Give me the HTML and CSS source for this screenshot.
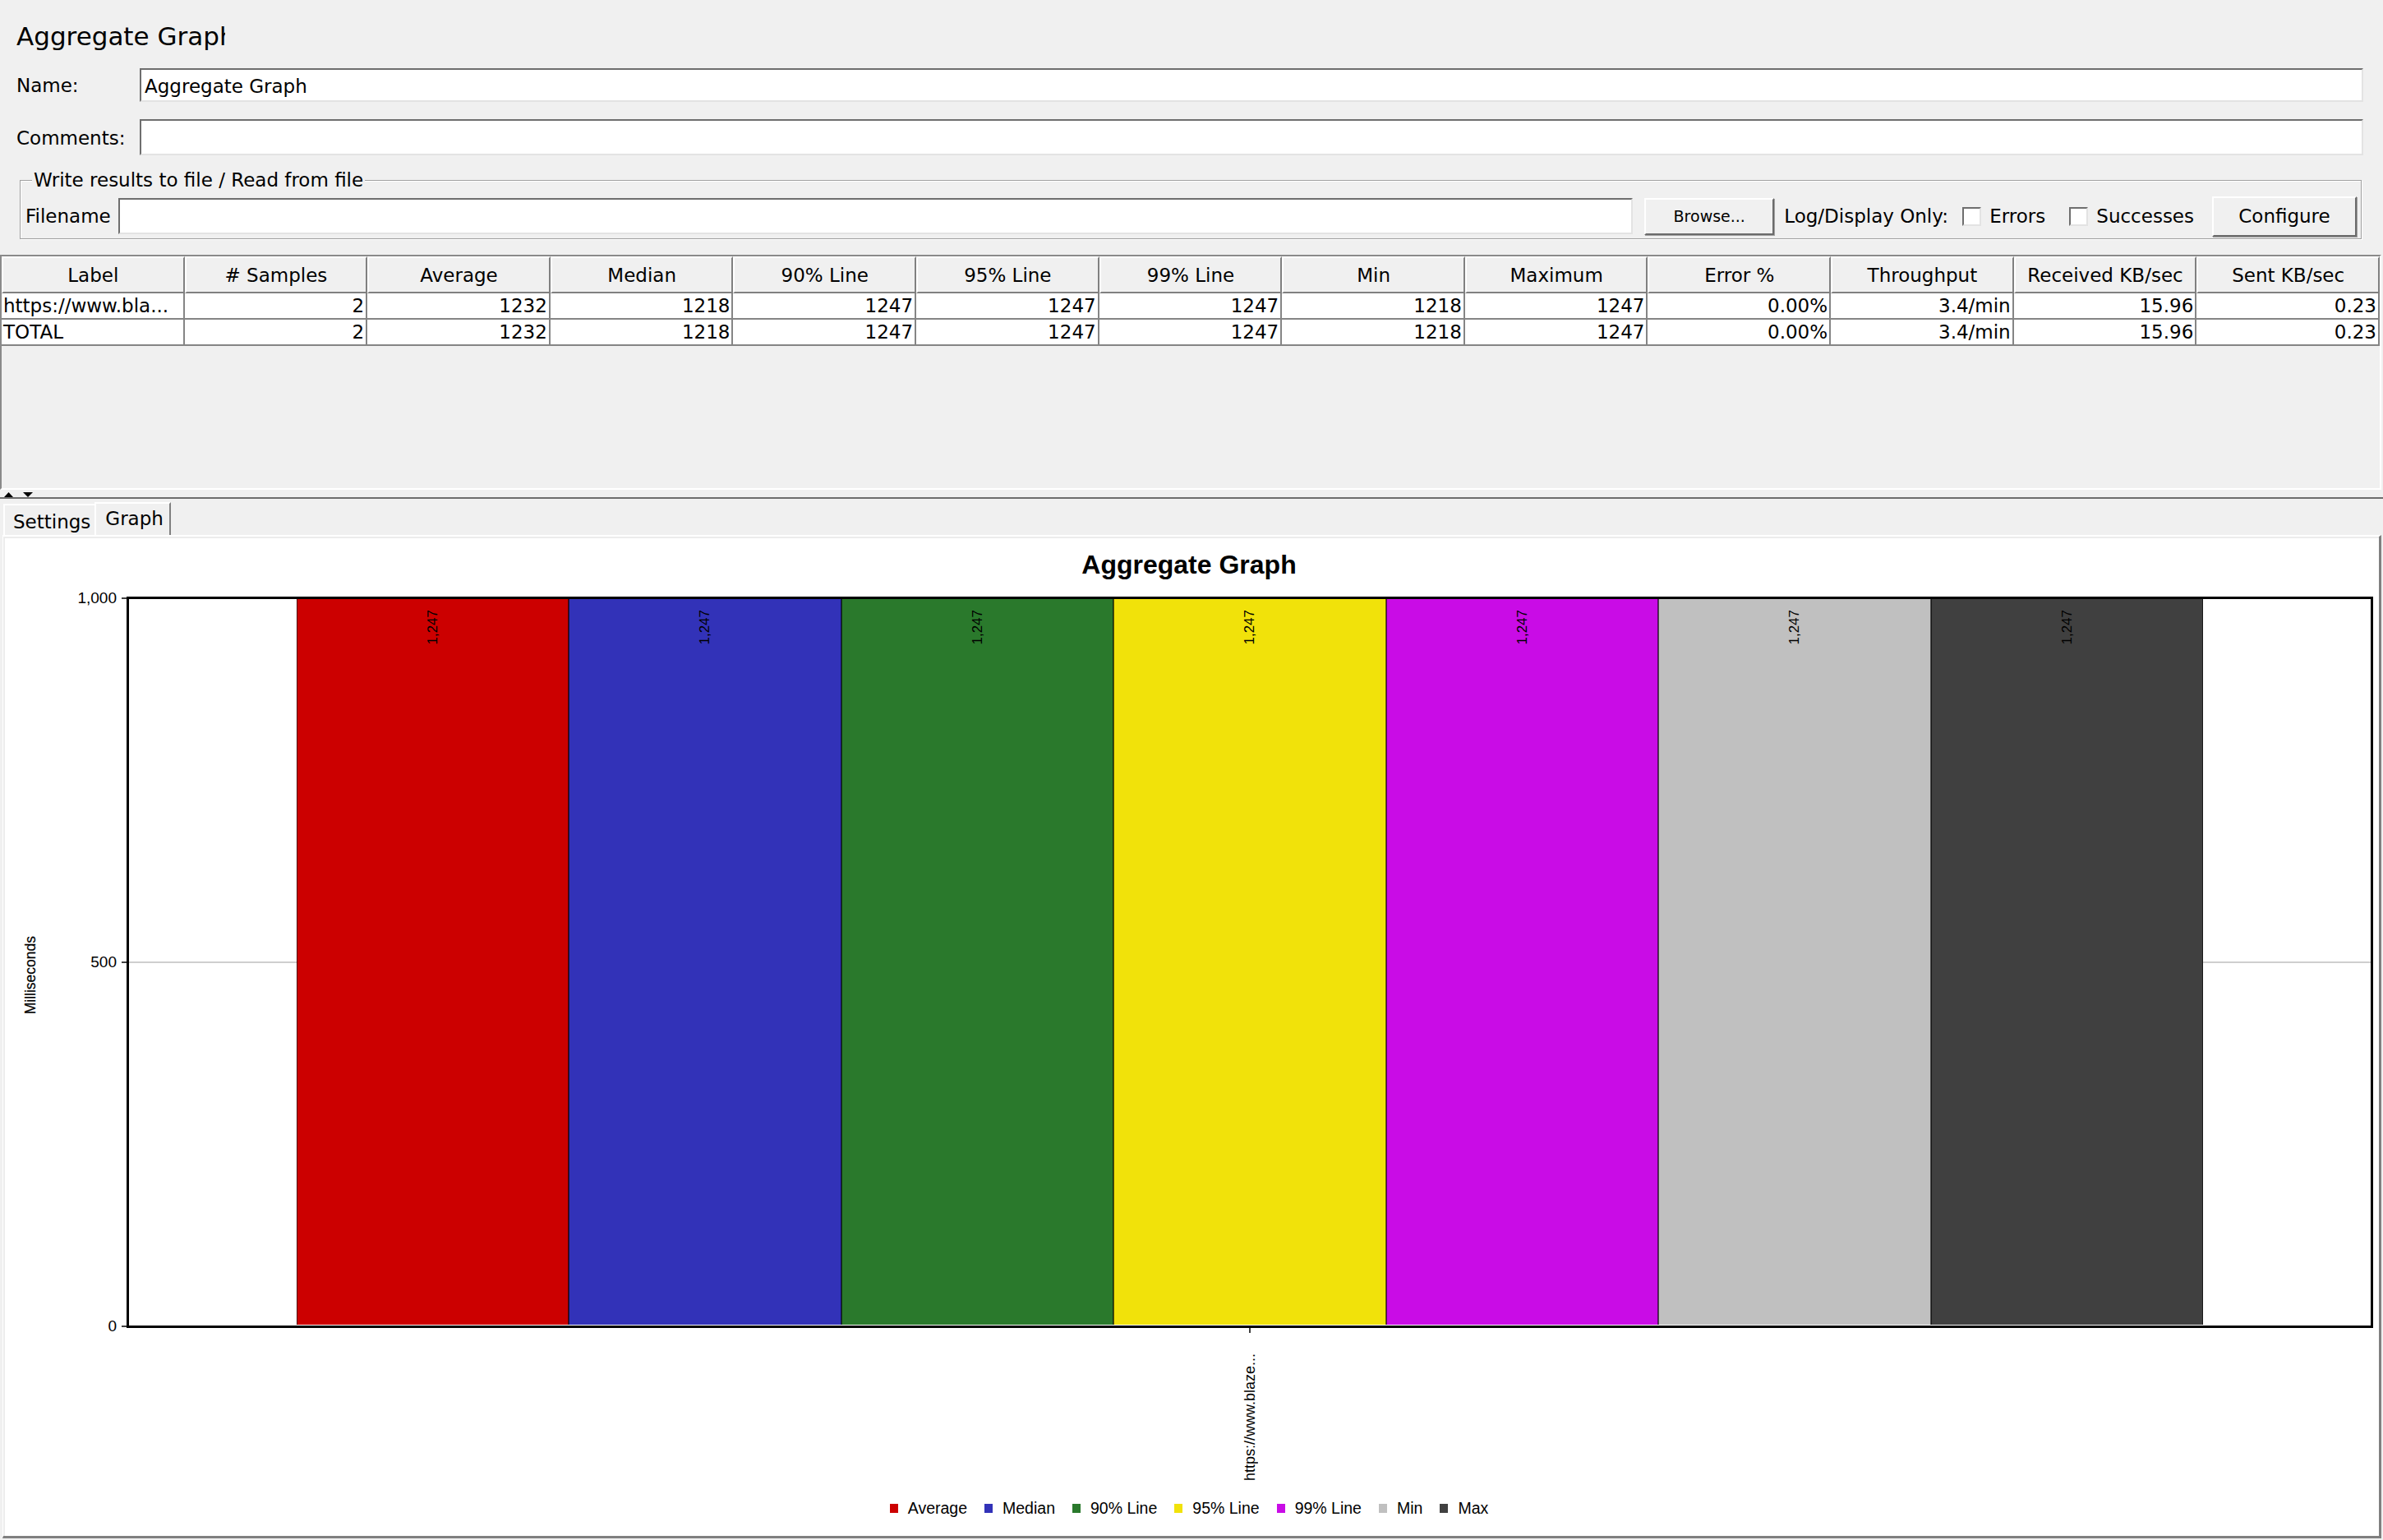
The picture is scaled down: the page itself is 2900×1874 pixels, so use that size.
FILE: index.html
```html
<!DOCTYPE html>
<html>
<head>
<meta charset="utf-8">
<title>Aggregate Graph</title>
<link rel="stylesheet" href="styles.css">
</head>
<body>
<div class="window">
  <div class="top">
    <div class="title"><span>Aggregate Graph</span></div>
    <div class="field-row name"><label class="lbl">Name:</label><div class="input">Aggregate Graph</div></div>
    <div class="field-row comments"><label class="lbl">Comments:</label><div class="input"></div></div>
    <fieldset class="filebox">
      <legend>Write results to file / Read from file</legend>
      <div class="file-row">
        <span class="fname">Filename</span>
        <div class="input file-input"></div>
        <div class="btn browse">Browse...</div>
        <span class="logonly">Log/Display Only:</span>
        <span class="check c1"></span><span class="cbl">Errors</span>
        <span class="check c2"></span><span class="cbl">Successes</span>
        <div class="btn configure">Configure</div>
      </div>
    </fieldset>
  </div>

  <div class="tablepane">
    <table>
      <thead>
        <tr><th>Label</th><th># Samples</th><th>Average</th><th>Median</th><th>90% Line</th><th>95% Line</th><th>99% Line</th><th>Min</th><th>Maximum</th><th>Error %</th><th>Throughput</th><th>Received KB/sec</th><th>Sent KB/sec</th></tr>
      </thead>
      <tbody>
        <tr><td class="l">https://www.bla...</td><td>2</td><td>1232</td><td>1218</td><td>1247</td><td>1247</td><td>1247</td><td>1218</td><td>1247</td><td>0.00%</td><td>3.4/min</td><td>15.96</td><td>0.23</td></tr>
        <tr><td class="l">TOTAL</td><td>2</td><td>1232</td><td>1218</td><td>1247</td><td>1247</td><td>1247</td><td>1218</td><td>1247</td><td>0.00%</td><td>3.4/min</td><td>15.96</td><td>0.23</td></tr>
      </tbody>
    </table>
  </div>

  <div class="divider">
    <svg width="40" height="6" viewBox="0 0 40 6"><path d="M0 6 L5.5 0 L11 6 Z" fill="#000"/><path d="M23 0 L35 0 L29 6 Z" fill="#000"/></svg>
  </div>

  <div class="tabs">
    <div class="tab">Settings</div>
    <div class="tab active">Graph</div>
  </div>

  <div class="panel">
    <div class="chart">
      <div class="chart-title">Aggregate Graph</div>
      <div class="yaxis">
        <div class="ylabel"><span>Milliseconds</span></div>
        <div class="yticks">
          <div class="ytick" style="top:1.5px"><span>1,000</span><i></i></div>
          <div class="ytick" style="top:444.5px"><span>500</span><i></i></div>
          <div class="ytick" style="top:887.5px"><span>0</span><i></i></div>
        </div>
      </div>
      <div class="plot">
        <div class="gridline" style="top:50%"></div>
        <div class="bars">
          <div class="bar c-avg"><span class="val">1,247</span></div>
          <div class="bar c-med"><span class="val">1,247</span></div>
          <div class="bar c-90"><span class="val">1,247</span></div>
          <div class="bar c-95"><span class="val">1,247</span></div>
          <div class="bar c-99"><span class="val">1,247</span></div>
          <div class="bar c-min"><span class="val">1,247</span></div>
          <div class="bar c-max"><span class="val">1,247</span></div>
        </div>
      </div>
      <div class="xaxis"><i class="xtick"></i><span class="xlabel">https://www.blaze...</span></div>
      <div class="legend">
        <div class="li"><i class="sw c-avg"></i>Average</div>
        <div class="li"><i class="sw c-med"></i>Median</div>
        <div class="li"><i class="sw c-90"></i>90% Line</div>
        <div class="li"><i class="sw c-95"></i>95% Line</div>
        <div class="li"><i class="sw c-99"></i>99% Line</div>
        <div class="li"><i class="sw c-min"></i>Min</div>
        <div class="li"><i class="sw c-max"></i>Max</div>
      </div>
    </div>
  </div>
</div>
</body>
</html>
```

FILE: styles.css
```css
* { box-sizing: border-box; }
html, body { margin: 0; padding: 0; }
body {
  background: #f0f0f0;
  font-family: "DejaVu Sans", sans-serif;
  font-size: 23px;
  color: #000;
}
.window {
  width: 2900px;
  height: 1874px;
  display: flex;
  flex-direction: column;
  overflow: hidden;
}

/* ---------- top form ---------- */
.top { padding: 0 24px 0 20px; flex: none; }
.title {
  margin-top: 26px;
  height: 36px;
  margin-bottom: 21px;
  font-size: 31px;
  line-height: 36px;
}
.title span {
  display: inline-block;
  width: 254px;
  overflow: hidden;
  white-space: nowrap;
  vertical-align: top;
}
.field-row { display: flex; align-items: center; }
.field-row.name { height: 41px; }
.field-row.comments { height: 44px; margin-top: 21px; }
.lbl { width: 150px; flex: none; line-height: 27px; padding-top: 2px; }
.input {
  flex: 1;
  height: 100%;
  background: #fff;
  border-style: solid;
  border-width: 2px;
  border-color: #6e6e6e #e3e3e3 #e3e3e3 #6e6e6e;
  padding: 2px 4px 0 4px;
  display: flex;
  align-items: center;
  white-space: nowrap;
  min-width: 0;
}

.filebox {
  margin: 17px 2px 0 4px;
  padding: 5px 5px 2px 5px;
  border: 1px solid #a0a0a0;
  box-shadow: inset 1px 1px 0 #fff, 1px 1px 0 #fff;
  min-width: 0;
}
.filebox legend {
  margin-left: 9px;
  padding: 0 2px;
  line-height: 27px;
  background: #f0f0f0;
  position: relative;
}
.file-row { display: flex; align-items: center; height: 50px; }
.fname { flex: none; margin-left: 1px; }
.file-input { height: 44px; margin-left: 9px; }
.btn {
  flex: none;
  display: flex;
  align-items: center;
  justify-content: center;
  background: #f0f0f0;
  border-style: solid;
  border-width: 2px;
  border-color: #fff #6b6b6b #6b6b6b #fff;
  box-shadow: 1px 1px 0 #a0a0a0;
}
.browse { width: 158px; height: 45px; margin-left: 14px; font-size: 19px; }
.logonly { margin-left: 12px; width: 198px; overflow: hidden; white-space: nowrap; flex: none; }
.check {
  flex: none;
  width: 23px;
  height: 23px;
  background: #fff;
  border-style: solid;
  border-width: 2px;
  border-color: #6e6e6e #e3e3e3 #e3e3e3 #6e6e6e;
}
.c1 { margin-left: 19px; }
.c2 { margin-left: 29px; }
.cbl { margin-left: 10px; flex: none; }
.configure { width: 176px; height: 49px; margin-left: 22px; }

/* ---------- table ---------- */
.tablepane {
  margin-top: 19px;
  margin-right: 2px;
  height: 286px;
  border-style: solid;
  border-width: 2px;
  border-color: #8a8a8a #fff #fff #8a8a8a;
  flex: none;
}
table {
  width: 100%;
  table-layout: fixed;
  border-collapse: separate;
  border-spacing: 0;
  font-size: 23px;
}
th {
  height: 45px;
  padding: 0;
  font-weight: normal;
  text-align: center;
  background: #f0f0f0;
  border-style: solid;
  border-width: 2px;
  border-color: #fff #808080 #808080 #fff;
  white-space: nowrap;
  overflow: hidden;
}
td {
  height: 32px;
  padding: 0 2px 0 2px;
  background: #fff;
  text-align: right;
  border-right: 2px solid #858585;
  border-bottom: 2px solid #858585;
  white-space: nowrap;
  overflow: hidden;
}
td.l { text-align: left; }

/* ---------- divider & tabs ---------- */
.divider {
  flex: none;
  height: 11px;
  border-bottom: 2px solid #6d6d6d;
  padding: 3px 0 0 5px;
  display: flex;
  align-items: flex-start;
}
.divider svg { display: block; }
.tabs {
  flex: none;
  height: 44px;
  display: flex;
  align-items: flex-end;
  padding-left: 4px;
}
.tab {
  height: 38px;
  padding: 7px 5px 0 10px;
  line-height: 27px;
  border-top: 2px solid #fff;
  border-left: 2px solid #fff;
}
.tab.active {
  height: 40px;
  padding: 5px 7px 0 11px;
  border-right: 2px solid #808080;
}

/* ---------- chart panel ---------- */
.panel {
  flex: 1;
  margin: 0 2px 2px 3px;
  background: #fff;
  border-style: solid;
  border-width: 2px 3px 3px 1px;
  border-color: #fff #808080 #808080 #fff;
  display: flex;
  min-height: 0;
}
.chart {
  flex: 1;
  border-top: 2px solid #ececec;
  border-left: 2px solid #ececec;
  padding: 16px 7px 0 0;
  display: grid;
  grid-template-columns: 148px 2734px;
  grid-template-rows: 32px 23px 890px 206px 24px;
  align-content: start;
  font-family: "Liberation Sans", Arial, sans-serif;
}
.chart-title {
  grid-column: 1 / -1;
  grid-row: 1;
  text-align: center;
  font-weight: bold;
  font-size: 32px;
  line-height: 32px;
}
.yaxis { grid-column: 1; grid-row: 3; display: flex; }
.plot { grid-column: 2; grid-row: 3; }
.xaxis { grid-column: 2; grid-row: 4; }
.legend { grid-column: 1 / -1; grid-row: 5; }

.ylabel {
  width: 62px;
  display: flex;
  align-items: center;
  justify-content: center;
  padding-top: 32px;
}
.ylabel span {
  writing-mode: vertical-rl;
  transform: rotate(180deg);
  font-size: 17.5px;
  line-height: 19px;
  -webkit-text-stroke: 0.2px #000;
}
.yticks { flex: 1; position: relative; }
.ytick {
  position: absolute;
  right: 0;
  display: flex;
  align-items: center;
  transform: translateY(-50%);
  font-size: 19px;
  line-height: 22px;
}
.ytick i { display: block; width: 6px; height: 2px; background: #404040; margin-left: 6px; }

.plot {
  position: relative;
  border: 3px solid #000;
  background: #fff;
}
.gridline {
  position: absolute;
  left: 0;
  right: 0;
  height: 2px;
  margin-top: -1px;
  background: #cfcfcf;
}
.bars {
  position: relative;
  display: flex;
  justify-content: center;
  height: 100%;
  padding-bottom: 1px;
}
.bar {
  flex: 0 0 331.5px;
  border-left: 1px solid rgba(0, 0, 0, 0.6);
  border-right: 1px solid rgba(0, 0, 0, 0.6);
  display: flex;
  justify-content: center;
  align-items: flex-start;
  padding-top: 13px;
}
.val {
  writing-mode: vertical-rl;
  transform: rotate(180deg);
  font-size: 17px;
  line-height: 18px;
}
.c-avg { background: #cc0000; }
.c-med { background: #3232b8; }
.c-90 { background: #2a792c; }
.c-95 { background: #f1e20a; }
.c-99 { background: #c90ce6; }
.c-min { background: #c0c0c0; }
.c-max { background: #404040; }

.xaxis { display: flex; flex-direction: column; align-items: center; }
.xtick { display: block; width: 2px; height: 6px; background: #404040; }
.xlabel {
  margin-top: 25px;
  writing-mode: vertical-rl;
  transform: rotate(180deg);
  font-size: 18px;
  line-height: 19px;
}
.legend {
  display: flex;
  justify-content: center;
  align-items: center;
  gap: 21px;
  font-size: 19.5px;
  line-height: 24px;
  height: 24px;
  padding-top: 2px;
}
.li { display: flex; align-items: center; }
.sw { display: block; width: 10px; height: 11px; margin-right: 12px; }
```
